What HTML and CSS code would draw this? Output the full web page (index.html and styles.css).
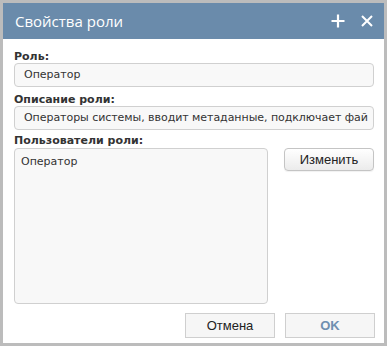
FILE: index.html
```html
<!DOCTYPE html>
<html lang="ru">
<head>
    <meta charset="UTF-8">
    <title>Свойства роли</title>
    <link rel="stylesheet" href="styles.css">
</head>
<body>
<div class="window">
    <div class="header">
        <div class="title">Свойства роли</div>
        <div class="tools">
            <svg class="tool tool-plus" width="14" height="14" viewBox="0 0 14 14">
                <path d="M7 0.5V13.5M0.5 7H13.5" stroke="#fff" stroke-width="2.2" fill="none"/>
            </svg>
            <svg class="tool tool-close" width="12" height="12" viewBox="0 0 12 12">
                <path d="M1 1L11 11M11 1L1 11" stroke="#fff" stroke-width="2" fill="none"/>
            </svg>
        </div>
    </div>
    <div class="content">
        <div class="label label-first">Роль:</div>
        <div class="field">Оператор</div>

        <div class="label label-second">Описание роли:</div>
        <div class="field field-long">Операторы системы, вводит метаданные, подключает фай</div>

        <div class="label label-third">Пользователи роли:</div>
        <div class="users">
            <div class="users-list">Оператор</div>
            <button class="btn btn-round">Изменить</button>
        </div>

        <div class="footer">
            <button class="btn btn-flat">Отмена</button>
            <button class="btn btn-flat btn-ok">OK</button>
        </div>
    </div>
</div>
</body>
</html>
```

FILE: styles.css
```css
html, body {
    margin: 0;
    padding: 0;
    background-color: #fff;
}

.window {
    width: 387px;
    height: 346px;
    box-sizing: border-box;
    border: 3px solid #bcbcbc;
    background-color: #fff;
    color: #333;
}

.header {
    height: 36px;
    background-color: #6a8bab;
    display: flex;
    align-items: center;
    justify-content: space-between;
    padding: 0 11px 0 12px;
}

.title {
    font-family: "Open Sans", "Noto Sans", sans-serif;
    font-size: 15px;
    color: #fff;
    margin-top: -1px;
}

.tools {
    display: flex;
    align-items: center;
    gap: 16px;
}

.tool {
    display: block;
}

.content {
    padding: 0 10px 0 11px;
}

.label {
    font-family: "DejaVu Sans", Verdana, sans-serif;
    font-weight: bold;
    font-size: 11px;
    line-height: 13px;
    color: #333;
}

.label-first {
    margin-top: 11px;
}

.label-second {
    margin-top: 6px;
}

.label-third {
    margin-top: 4px;
}

.field {
    height: 24px;
    box-sizing: border-box;
    border: 1px solid #d0d0d0;
    border-radius: 4px;
    background-color: #f8f8f8;
    padding: 0 4px 0 9px;
    font-family: "DejaVu Sans", Verdana, sans-serif;
    font-size: 11px;
    line-height: 22px;
    color: #333;
    white-space: nowrap;
    overflow: hidden;
}

.field-long {
    letter-spacing: -0.05px;
}

.users {
    display: flex;
    align-items: flex-start;
    gap: 16px;
    margin-top: 1px;
}

.users-list {
    width: 254px;
    height: 156px;
    box-sizing: border-box;
    border: 1px solid #d0d0d0;
    border-radius: 4px;
    background-color: #f8f8f8;
    padding: 6px 6px;
    font-family: "DejaVu Sans", Verdana, sans-serif;
    font-size: 11px;
    line-height: 14px;
    color: #333;
}

.btn {
    font-family: "Liberation Sans", Arial, sans-serif;
    font-size: 13px;
    color: #222;
    padding: 0;
    margin: 0;
    cursor: pointer;
}

.btn-round {
    width: 90px;
    height: 23px;
    border: 1px solid #c4c4c4;
    border-radius: 4px;
    background: linear-gradient(#ffffff, #ebebeb);
    box-shadow: 0 1px 1px rgba(0, 0, 0, 0.06);
}

.footer {
    display: flex;
    justify-content: flex-end;
    gap: 10px;
    margin-top: 9px;
    margin-right: -1px;
}

.btn-flat {
    width: 90px;
    height: 25px;
    border: 1px solid #cfcfcf;
    background-color: #f6f6f6;
}

.btn-ok {
    font-weight: bold;
    color: #6f8fb0;
}
```
